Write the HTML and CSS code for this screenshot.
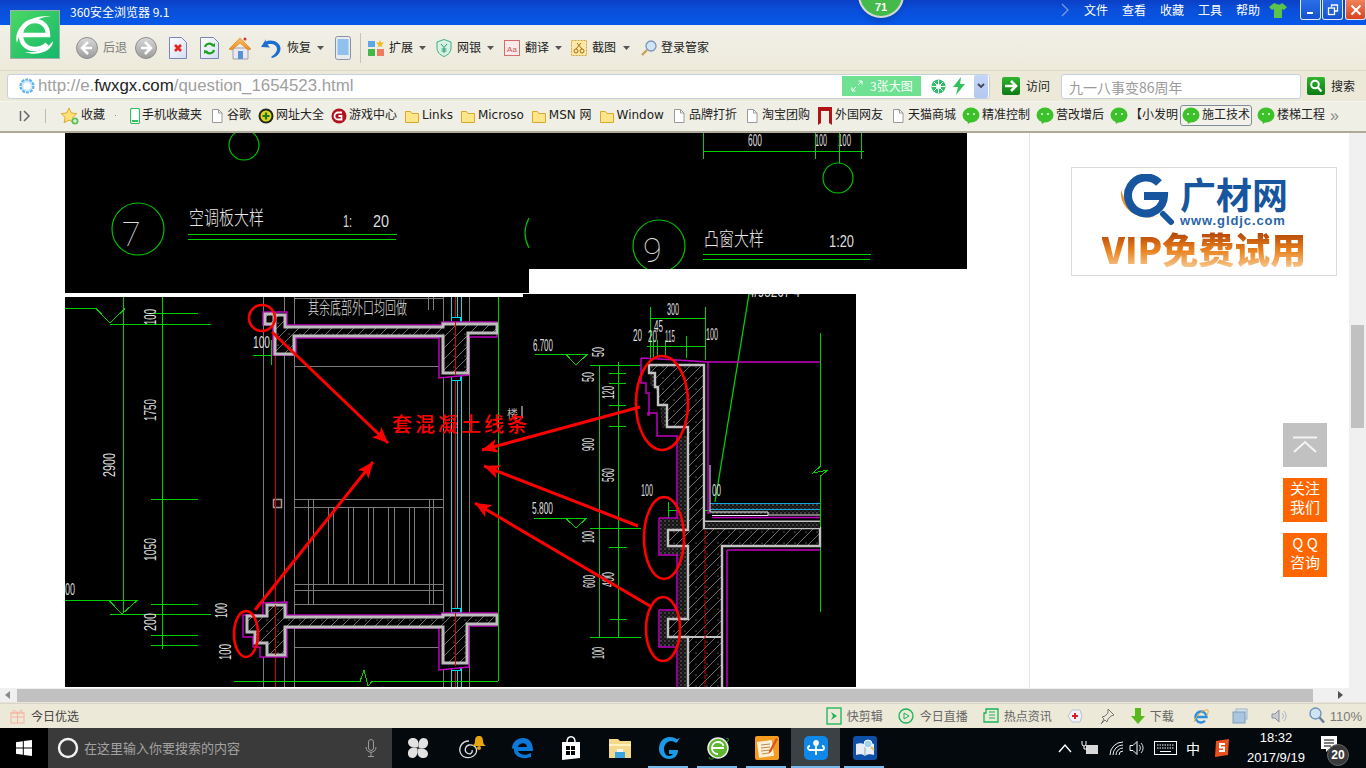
FILE: index.html
```html
<!DOCTYPE html>
<html lang="zh-CN">
<head>
<meta charset="utf-8">
<title>360安全浏览器 9.1</title>
<link rel="stylesheet" href="styles.css">
</head>
<body>
<svg class="defs" aria-hidden="true">
  <defs>
    <linearGradient id="gBall" x1="0" y1="0" x2="0" y2="1"><stop offset="0" stop-color="#d8d8d8"/><stop offset="1" stop-color="#9c9c9c"/></linearGradient>
    <linearGradient id="gPaper" x1="0" y1="0" x2="1" y2="1"><stop offset="0" stop-color="#ffffff"/><stop offset="1" stop-color="#d5dcf5"/></linearGradient>
    <linearGradient id="gGo" x1="0" y1="0" x2="0" y2="1"><stop offset="0" stop-color="#2fb52f"/><stop offset="1" stop-color="#0c7a14"/></linearGradient>
    <linearGradient id="gRoof" x1="0" y1="0" x2="0" y2="1"><stop offset="0" stop-color="#ffc060"/><stop offset="1" stop-color="#f08a20"/></linearGradient>
    <symbol id="doc" viewBox="0 0 14 16"><path d="M2.5 1.5h6l3.5 3.5v9.500h-9.500z" fill="#fff" stroke="#9a9a9a"/><path d="M8.500 1.500v3.500h3.500" fill="none" stroke="#9a9a9a"/></symbol>
    <symbol id="folder" viewBox="0 0 16 16"><path d="M1.500 3.500h5l1.500 2h6.500v9h-13z" fill="#ffe58a" stroke="#d9a82e"/></symbol>
    <symbol id="wechat" viewBox="0 0 18 18"><ellipse cx="9" cy="8" rx="8.500" ry="7.500" fill="#3cc12a"/><path d="M5 13l1 4 4-3z" fill="#3cc12a"/><circle cx="6" cy="7" r="1" fill="#eaffea"/><circle cx="12" cy="7" r="1" fill="#eaffea"/></symbol>
    <symbol id="caret" viewBox="0 0 7 4"><path d="M0 0h7L3.500 4z" fill="#555"/></symbol>
    <pattern id="hatch" width="11" height="11" patternUnits="userSpaceOnUse"><rect width="11" height="11" fill="#000"/><path d="M0 11L11 0" stroke="#6e6e6e" stroke-width="1"/><circle cx="3" cy="4" r=".6" fill="#aaa"/></pattern>
    <pattern id="speck" width="4" height="4" patternUnits="userSpaceOnUse"><rect width="4" height="4" fill="#141414"/><circle cx="1" cy="1" r=".7" fill="#888"/><circle cx="3" cy="3" r=".5" fill="#666"/></pattern>
    <marker id="ah" markerUnits="userSpaceOnUse" markerWidth="18" markerHeight="14" refX="16" refY="7" orient="auto"><path d="M0 0L16 7L0 14L4 7z" fill="#f00"/></marker>
  </defs>
</svg>

<div class="app">
  <header class="titlebar">
    <span class="title">360安全浏览器 9.1</span>
    <div class="menu">
      <svg class="chev" width="8" height="14" viewBox="0 0 8 14"><path d="M1 1l6 6-6 6" fill="none" stroke="#7f9fd8" stroke-width="1.200"/></svg>
      <span>文件</span><span>查看</span><span>收藏</span><span>工具</span><span>帮助</span>
      <svg class="shirt" width="18" height="16" viewBox="0 0 18 16"><path d="M5 1L0 5l3 3 2-1v9h8V7l2 1 3-3-5-4-2 1.500h-2z" fill="#5bc24a"/></svg>
      <div class="winbtns">
        <button class="winbtn"><svg width="10" height="10" viewBox="0 0 10 10"><rect x="1" y="7" width="6" height="2" fill="#fff"/></svg></button>
        <button class="winbtn"><svg width="12" height="12" viewBox="0 0 12 12"><path d="M4.500 3V1h6v6H8" fill="none" stroke="#fff" stroke-width="1.300"/><rect x="1.500" y="4" width="6" height="6.500" fill="none" stroke="#fff" stroke-width="1.300"/></svg></button>
        <button class="winbtn close"><svg width="12" height="12" viewBox="0 0 12 12"><path d="M1.500 1.500l9 9M10.500 1.500l-9 9" stroke="#fff" stroke-width="2"/></svg></button>
      </div>
    </div>
  </header>

  <div class="logo">
    <svg width="48" height="47" viewBox="0 0 48 47">
      <path d="M11 24h26c0-9-6-14-13-14-8 0-14 6-14 14 0 9 6 14 14 14 5 0 9-2 12-5" fill="none" stroke="#fff" stroke-width="4.500"/>
      <path d="M6 32C2 18 16 4 40 5 24 7 10 16 6 32z" fill="#fff"/>
      <path d="M42 30C42 40 26 46 14 41 26 42 36 38 42 30z" fill="#fff"/>
    </svg>
  </div>
  <div class="badge"><span>71</span></div>

  <nav class="toolbar">
    <svg class="ic" width="22" height="22" viewBox="0 0 22 22"><circle cx="11" cy="11" r="10.500" fill="url(#gBall)" stroke="#8e8e8e"/><path d="M12 5l-6 6 6 6M6 11h10" fill="none" stroke="#fff" stroke-width="2.600"/></svg>
    <span class="ml5 dim">后退</span>
    <svg class="ic ml8" width="22" height="22" viewBox="0 0 22 22"><circle cx="11" cy="11" r="10.500" fill="url(#gBall)" stroke="#8e8e8e"/><path d="M10 5l6 6-6 6M16 11H6" fill="none" stroke="#fff" stroke-width="2.600"/></svg>
    <svg class="ic ml12" width="18" height="22" viewBox="0 0 18 22"><path d="M.5.500h12l5 5v16H.5z" fill="url(#gPaper)" stroke="#7a86b8"/><path d="M6 8l6 6M12 8l-6 6" stroke="#e8251a" stroke-width="2.600"/></svg>
    <svg class="ic ml13" width="19" height="22" viewBox="0 0 19 22"><path d="M.5.500h13l5 5v16H.5z" fill="url(#gPaper)" stroke="#7a86b8"/><path d="M5 10a4.500 4.500 0 0 1 8-1.500M14 13a4.500 4.500 0 0 1-8 1.500" fill="none" stroke="#1ba51b" stroke-width="2.200"/><path d="M11 9l4 1V6zM8 14l-4-1v4z" fill="#1ba51b"/></svg>
    <svg class="ic ml9" width="24" height="24" viewBox="0 0 24 24"><path d="M5 12v11h15V12z" fill="#e8e8ee" stroke="#9aa3b5"/><rect x="10" y="15" width="5" height="8" fill="#5a90d8"/><path d="M1 13L12 2l11 11-3 1-8-7-8 7z" fill="url(#gRoof)" stroke="#d27a1c" stroke-width=".6"/><circle cx="17" cy="3" r="1.500" fill="#c33"/></svg>
    <svg class="ic ml7" width="22" height="22" viewBox="0 0 22 22"><path d="M7 2L2 10l9 .5-2.500-3C13 6 18 8 18 12c0 3-3 6-6 8l1 1c5-1 8.500-5 8.500-9.500C21.500 5 13 1.500 6.500 4.500z" fill="#1c6fd1"/></svg>
    <span class="ml6">恢复</span>
    <svg class="ml6" width="7" height="4"><use href="#caret"/></svg>
    <svg class="ic ml11" width="16" height="24" viewBox="0 0 16 24"><rect x=".5" y=".5" width="15" height="23" rx="2" fill="#e8eaee" stroke="#8a93a5"/><rect x="2.500" y="3" width="11" height="16" fill="#8fc0ee"/></svg>
    <i class="divider ml9"></i>
    <svg class="ic ml7" width="16" height="16" viewBox="0 0 16 16"><rect x="0" y="1" width="7" height="6" fill="#5aa8e8"/><path d="M12 0l1 2.500h3L13.500 5l.8 2.500L12 6l-2.300 1.500L10.500 5 8 2.500h3z" fill="#f3b71c"/><rect x="0" y="9" width="7" height="7" fill="#45b649"/><rect x="9" y="9" width="7" height="7" fill="#ee7b60"/></svg>
    <span class="ml5">扩展</span>
    <svg class="ml6" width="7" height="4"><use href="#caret"/></svg>
    <svg class="ic ml10" width="16" height="18" viewBox="0 0 16 18"><path d="M8 .5l7 2.500v6c0 4-3 7-7 8.500-4-1.500-7-4.500-7-8.500V3z" fill="#d5f2e5" stroke="#3fae82"/><path d="M5 5l3 3.500L11 5M8 8.500V14M5.500 10h5M5.500 12h5" fill="none" stroke="#2d9a6e"/></svg>
    <span class="ml5">网银</span>
    <svg class="ml6" width="7" height="4"><use href="#caret"/></svg>
    <svg class="ic ml10" width="16" height="16" viewBox="0 0 16 16"><rect x=".5" y=".5" width="15" height="15" fill="#fbeaea" stroke="#d86a6a"/><text class="ad-mark" x="8" y="11.500">Aa</text></svg>
    <span class="ml5">翻译</span>
    <svg class="ml6" width="7" height="4"><use href="#caret"/></svg>
    <svg class="ic ml9" width="16" height="16" viewBox="0 0 16 16"><rect x=".5" y=".5" width="15" height="15" fill="#ffe9a8" stroke="#d9a440" stroke-dasharray="2 1"/><circle cx="5" cy="11" r="2" fill="none" stroke="#b06a10"/><circle cx="11" cy="11" r="2" fill="none" stroke="#b06a10"/><path d="M5 9l5-6M11 9L6 3" stroke="#b06a10"/></svg>
    <span class="ml5">截图</span>
    <svg class="ml7" width="7" height="4"><use href="#caret"/></svg>
    <svg class="ic ml11" width="16" height="16" viewBox="0 0 16 16"><circle cx="10" cy="6" r="5" fill="#cfe4f8" stroke="#7a97b8" stroke-width="1.300"/><path d="M6 10l-5 5" stroke="#c9a25c" stroke-width="2.400"/></svg>
    <span class="ml4">登录管家</span>
  </nav>

  <div class="addrbar">
    <div class="urlbox">
      <svg class="ic" width="16" height="16" viewBox="0 0 16 16"><circle cx="8" cy="8" r="6.500" fill="#cfe8fb" stroke="#62b3ee" stroke-width="2.200" stroke-dasharray="3 1"/><circle cx="8" cy="8" r="3.500" fill="#fff"/></svg>
      <span class="url">http://e.<b>fwxgx.com</b>/question_1654523.html</span>
      <span class="bigpic">
        <svg width="12" height="12" viewBox="0 0 12 12"><path d="M1 11l4-4M7 5l4-4M7.500 1H11v3.500M1 7.500V11h3.500" fill="none" stroke="#fff"/></svg>
        <span>3张大图</span>
      </span>
      <svg class="ml10 ic" width="15" height="15" viewBox="0 0 15 15"><circle cx="7.500" cy="7.500" r="7" fill="#2fbf6a"/><circle cx="7.500" cy="7.500" r="2.500" fill="#fff"/><path d="M7.500 1v4M14 7.500h-4M7.500 14v-4M1 7.500h4M3 3l3 3M12 3L9 6M12 12L9 9M3 12l3-3" stroke="#fff"/></svg>
      <svg class="ml7 ic" width="12" height="18" viewBox="0 0 12 18"><path d="M8 0L0 10h5l-2 8 9-11H7z" fill="#2fc25f"/></svg>
      <span class="drop"><svg width="8" height="6" viewBox="0 0 8 6"><path d="M1 1l3 3 3-3" fill="none" stroke="#445" stroke-width="1.800"/></svg></span>
    </div>
    <svg class="ic ml12" width="18" height="18" viewBox="0 0 18 18"><rect width="18" height="18" rx="2" fill="url(#gGo)"/><path d="M3 9h10M9 4l5 5-5 5" fill="none" stroke="#fff" stroke-width="2.600"/></svg>
    <span class="ml6">访问</span>
    <div class="searchbox">九一八事变86周年</div>
    <svg class="ic ml6" width="18" height="18" viewBox="0 0 18 18"><rect width="18" height="18" rx="2" fill="url(#gGo)"/><circle cx="8" cy="7.500" r="3.800" fill="none" stroke="#fff" stroke-width="2"/><path d="M11 10.500l3.500 4" stroke="#fff" stroke-width="2.200"/></svg>
    <span class="ml6">搜索</span>
  </div>

  <div class="favs">
    <svg class="favtoggle" width="12" height="12" viewBox="0 0 12 12"><path d="M1.500 1v10" stroke="#666" stroke-width="1.500"/><path d="M5 1l5 5-5 5" fill="none" stroke="#666" stroke-width="1.500"/></svg>
    <i class="favsep"></i>
    <a class="fav ml15"><svg width="18" height="18" viewBox="0 0 18 18"><path d="M8 1l2.300 5 5.500.6-4 3.700 1.100 5.400L8 13l-4.900 2.700 1.100-5.400-4-3.700L5.700 6z" fill="#ffe27a" stroke="#dca92a"/><circle cx="14" cy="14" r="3.500" fill="#5cc05c"/><path d="M14 12v4M12 14h4" stroke="#fff"/></svg>收藏</a>
    <i class="dot"></i>
    <a class="fav ml14"><svg width="10" height="16" viewBox="0 0 10 16"><rect x=".5" y=".5" width="9" height="15" rx="1.500" fill="#fff" stroke="#2fc25f" stroke-width="1.200"/><rect x="2" y="12" width="6" height="2" fill="#2fc25f"/></svg>手机收藏夹</a>
    <a class="fav"><svg class="pg" width="14" height="16"><use href="#doc"/></svg>谷歌</a>
    <a class="fav"><svg width="16" height="16" viewBox="0 0 16 16"><circle cx="8" cy="8" r="7.500" fill="#1e2a12"/><circle cx="8" cy="8" r="5.500" fill="#e2d622"/><path d="M8 4.500v7M4.500 8h7" stroke="#1f7a1f" stroke-width="2.200"/></svg>网址大全</a>
    <a class="fav"><svg width="16" height="16" viewBox="0 0 16 16"><circle cx="8" cy="8" r="7.500" fill="#b1121f"/><path d="M11 4.500H7A3.500 3.500 0 0 0 7 11.500h3.500V8H7.500" fill="none" stroke="#fff" stroke-width="1.800"/></svg>游戏中心</a>
    <a class="fav"><svg width="16" height="16"><use href="#folder"/></svg>Links</a>
    <a class="fav"><svg width="16" height="16"><use href="#folder"/></svg>Microso</a>
    <a class="fav"><svg width="16" height="16"><use href="#folder"/></svg>MSN 网</a>
    <a class="fav"><svg width="16" height="16"><use href="#folder"/></svg>Window</a>
    <a class="fav"><svg class="pg" width="14" height="16"><use href="#doc"/></svg>品牌打折</a>
    <a class="fav"><svg class="pg" width="14" height="16"><use href="#doc"/></svg>淘宝团购</a>
    <a class="fav"><svg class="pg" width="14" height="18" viewBox="0 0 14 18"><path d="M0 0h14v18l-3-2V4H3v12l-3 2z" fill="#b01414"/></svg>外国网友</a>
    <a class="fav"><svg class="pg" width="14" height="16"><use href="#doc"/></svg>天猫商城</a>
    <a class="fav wx"><svg width="18" height="18"><use href="#wechat"/></svg>精准控制</a>
    <a class="fav wx"><svg width="18" height="18"><use href="#wechat"/></svg>营改增后</a>
    <a class="fav wx"><svg width="18" height="18"><use href="#wechat"/></svg>【小发明</a>
    <a class="fav on"><svg width="18" height="18"><use href="#wechat"/></svg>施工技术</a>
    <a class="fav wx"><svg width="18" height="18"><use href="#wechat"/></svg>楼梯工程</a>
    <span class="more">»</span>
  </div>

  <main class="page">
    <div class="doc">
      <div class="column">
        <svg class="cad" width="902" height="554" viewBox="65 133 902 554">
          <rect x="65" y="133" width="464" height="160" fill="#000"/>
          <rect x="529" y="133" width="438" height="136" fill="#000"/>
          <rect x="65" y="297" width="458" height="390" fill="#000"/>
          <rect x="523" y="294" width="333" height="393" fill="#000"/>

          <g class="gr">
            <circle class="thin" cx="244" cy="145" r="15"/>
            <circle class="thin" cx="138" cy="229" r="26"/>
            <circle class="thin" cx="838" cy="178" r="15"/>
            <circle class="thin" cx="659" cy="246" r="26"/>
            <path class="thin" d="M529 218Q521 233 529 248"/>
          </g>
          <text class="big" x="122" y="246">7</text>
          <text class="big" x="643" y="262">9</text>
          <text class="note" transform="translate(189,225) scale(1,1.300)">空调板大样</text>
          <text class="note" transform="translate(704,246) scale(1,1.300)">凸窗大样</text>
          <text class="n" x="343" y="227" textLength="9" lengthAdjust="spacingAndGlyphs">1:</text>
          <text class="n" x="373" y="227" textLength="16" lengthAdjust="spacingAndGlyphs">20</text>
          <text class="n" x="829" y="247" textLength="25" lengthAdjust="spacingAndGlyphs">1:20</text>
          <text class="n" x="748" y="146" textLength="14" lengthAdjust="spacingAndGlyphs">600</text>
          <text class="n" x="815" y="146" textLength="12" lengthAdjust="spacingAndGlyphs">100</text>
          <text class="n" x="838" y="146" textLength="13" lengthAdjust="spacingAndGlyphs">100</text>
          <path class="gl" d="M188 234.500H397M188 239.500H396M703 254.500H871M703 259.500H870M703 151.500H864M703.500 133V159M815.500 133V159M839.500 133V163M861.500 133V159"/>

          <text class="n" x="748" y="297" textLength="52" lengthAdjust="spacingAndGlyphs">4/95267 4</text>
          <rect x="529" y="269" width="438" height="25" fill="#fff"/>
          <rect x="856" y="269" width="111" height="420" fill="#fff"/>

          <path class="gy" d="M263.500 297V687M284.500 297V687M294.500 297V687M443.500 297V687M469.500 297V687M294 298.500H443M428.500 297V310M433.500 297V310M294 366.500H443M294 647.500H439"/>
          <path class="gy" d="M294 499.500H443M294 507.500H443M294 584.500H443M294 590.500H443M294 604.500H443M308.500 499V604M313.500 499V604M328.500 507V584M333.500 507V584M348.500 507V584M353.500 507V584M368.500 507V584M373.500 507V584M388.500 507V584M394.500 507V584M409.500 507V584M414.500 507V584M429.500 499V604M433.500 499V604"/>
          <rect class="sq" x="273.500" y="499.500" width="8" height="8"/>
          <path class="rd" d="M275.500 335V687M455.500 297V687"/>
          <path class="cy" d="M451.500 297V687M461.500 297V687M457.500 297V687"/>
          <rect class="cybox" x="451.500" y="317.500" width="9" height="6"/>
          <rect class="cybox" x="451.500" y="374.500" width="9" height="6"/>
          <rect class="cybox" x="451.500" y="608.500" width="9" height="4"/>
          <rect class="cybox" x="451.500" y="666.500" width="9" height="4"/>

          <polygon class="mg" points="263,312 287,312 287,325 442,325 442,322 497,322 497,337 469,337 469,375 439,378 439,338 296,338 296,355 273,355 273,325 263,325"/>
          <polygon class="slab" points="275,315 285,315 285,327 443,327 443,324 497,324 497,333 468,333 468,373 443,373 443,336 294,336 294,354 275,354"/>
          <rect class="slab" x="265" y="314" width="9" height="10"/>
          <polygon class="mg" points="263,603 287,602 287,615 442,615 442,613 497,613 497,626 469,626 469,667 439,670 439,628 287,628 287,657 260,657 260,647 253,647 253,637 243,637 243,615 263,615"/>
          <polygon class="slab" points="267,605 285,605 285,617 443,617 443,615 497,615 497,624 467,624 467,663 443,663 443,627 285,627 285,655 267,655 267,643 255,643 255,632 247,632 247,616 267,616"/>
          <path class="rd" d="M275.500 605V655M455.500 322V375M455.500 613V666"/>

          <path class="gl" d="M123.500 297V613M162.500 297V649M65 308.500H96L110 323 125 308.500M150 313.500H198M110 324.500H211M151 499.500H198M151 604.500H198M110 614.500H211M151 635.500H198M151 645.500H198M65 600.500H137L122 614 109 600.500M498.500 297V681M234 681.500H360L364 670 368 686 372 681.500H498M271 340V365M253 355.500H272"/>
          <path class="gl" d="M650.500 307V360M705.500 307V360M650 318.500H705M647 346.500H706M653.500 340V358M657.500 340V358M665.500 340V358M686.500 336V358M535 354.500H587L576 365 566 354.500M590 365.500H641M599.500 365V637M618.500 362V637M609 373.500H626M609 383.500H626M609 405.500H626M609 426.500H626M590 528.500H641M609 547.500H627M610 619.500H627M590 637.500H641M534 518.500H586L576 528 566 518.500M668 502V518M668 510.500H712"/>
          <path class="gl" d="M820.500 333V466L813 473 828 470 820.500 476V612"/>
          <path class="gld" d="M749 294L715 502"/>

          <path class="mgl" d="M708 362H820M641 358L677 360 708 362V513H712M641 358V383H646V393H649V415H648V413H657V436H677V688M659 518H680M659 518V555H680M659 610H677M659 610V647H677M727 550V688M727 550H820M712 517.500H820M688 688"/>
          <rect class="band" x="678" y="436" width="9" height="252"/>
          <polygon class="speck" points="652,367 664,367 664,400 670,400 670,428 662,428 660,404 656,390 650,385 650,372"/>
          <rect class="speck" x="660" y="519" width="20" height="35"/>
          <rect class="speck" x="660" y="611" width="18" height="35"/>
          <polygon class="wall" points="649,365 704,365 704,528 820,528 820,546 722,546 722,690 688,690 688,637 668,637 668,619 688,619 688,546 668,546 668,530 688,530 688,427 667,427 667,405 658,405 658,387 655,387 655,373 649,373"/>
          <path class="gtk" d="M688 637H722M704 521.500H820"/>
          <rect class="speck" x="710" y="504" width="110" height="10"/>
          <path class="cyb" d="M710 503.500H820M710 509.500H820"/>
          <path class="wh" d="M710 465V512H768V515H820M712 515.500H768"/>
          <rect class="speck" x="705" y="522" width="115" height="6"/>
          <path class="rdd" d="M705 530V687"/>

          <text class="cnt" transform="translate(308,314) scale(1,1.600)">其余底部外口均回做</text>
          <rect x="65" y="293" width="458" height="4" fill="#fff"/>
          <rect x="523" y="293" width="6" height="1" fill="#fff"/>
          <rect x="529" y="269" width="327" height="25" fill="#fff"/>

          <text class="n" transform="rotate(-90 156 325)" x="156" y="325" textLength="16" lengthAdjust="spacingAndGlyphs">100</text>
          <text class="n" transform="rotate(-90 156 421)" x="156" y="421" textLength="22" lengthAdjust="spacingAndGlyphs">1750</text>
          <text class="n" transform="rotate(-90 115 477)" x="115" y="477" textLength="24" lengthAdjust="spacingAndGlyphs">2900</text>
          <text class="n" transform="rotate(-90 156 561)" x="156" y="561" textLength="23" lengthAdjust="spacingAndGlyphs">1050</text>
          <text class="n" transform="rotate(-90 156 631)" x="156" y="631" textLength="18" lengthAdjust="spacingAndGlyphs">200</text>
          <text class="n" transform="rotate(-90 227 618)" x="227" y="618" textLength="15" lengthAdjust="spacingAndGlyphs">100</text>
          <text class="n" transform="rotate(-90 231 660)" x="231" y="660" textLength="16" lengthAdjust="spacingAndGlyphs">100</text>
          <text class="n" x="65" y="595" textLength="10" lengthAdjust="spacingAndGlyphs">00</text>
          <text class="n" x="253" y="348" textLength="17" lengthAdjust="spacingAndGlyphs">100</text>

          <text class="n" transform="rotate(-90 604 357)" x="604" y="357" textLength="10" lengthAdjust="spacingAndGlyphs">50</text>
          <text class="n" transform="rotate(-90 594 382)" x="594" y="382" textLength="10" lengthAdjust="spacingAndGlyphs">50</text>
          <text class="n" transform="rotate(-90 614 399)" x="614" y="399" textLength="13" lengthAdjust="spacingAndGlyphs">120</text>
          <text class="n" transform="rotate(-90 594 451)" x="594" y="451" textLength="13" lengthAdjust="spacingAndGlyphs">900</text>
          <text class="n" transform="rotate(-90 614 482)" x="614" y="482" textLength="14" lengthAdjust="spacingAndGlyphs">560</text>
          <text class="n" transform="rotate(-90 594 543)" x="594" y="543" textLength="12" lengthAdjust="spacingAndGlyphs">100</text>
          <text class="n" transform="rotate(-90 595 588)" x="595" y="588" textLength="13" lengthAdjust="spacingAndGlyphs">600</text>
          <text class="n" transform="rotate(-90 614 587)" x="614" y="587" textLength="15" lengthAdjust="spacingAndGlyphs">400</text>
          <text class="n" transform="rotate(-90 604 659)" x="604" y="659" textLength="12" lengthAdjust="spacingAndGlyphs">100</text>

          <text class="n" x="667" y="315" textLength="12" lengthAdjust="spacingAndGlyphs">300</text>
          <text class="n" x="654" y="332" textLength="9" lengthAdjust="spacingAndGlyphs">45</text>
          <text class="n" x="633" y="341" textLength="9" lengthAdjust="spacingAndGlyphs">20</text>
          <text class="n" x="648" y="342" textLength="9" lengthAdjust="spacingAndGlyphs">20</text>
          <text class="n" x="665" y="342" textLength="10" lengthAdjust="spacingAndGlyphs">115</text>
          <text class="n" x="706" y="340" textLength="12" lengthAdjust="spacingAndGlyphs">100</text>
          <text class="n" x="533" y="351" textLength="20" lengthAdjust="spacingAndGlyphs">6.700</text>
          <text class="n" x="532" y="514" textLength="21" lengthAdjust="spacingAndGlyphs">5.800</text>
          <text class="n" x="641" y="496" textLength="12" lengthAdjust="spacingAndGlyphs">100</text>
          <text class="n" x="712" y="496" textLength="9" lengthAdjust="spacingAndGlyphs">00</text>
          <text class="cnt" x="507" y="418">楼</text>
          <path class="wh" d="M522 406V418"/>

          <line class="arrow" x1="272" y1="332" x2="388" y2="443"/>
          <line class="arrow" x1="255" y1="610" x2="373" y2="462"/>
          <line class="arrow" x1="640" y1="407" x2="482" y2="450"/>
          <line class="arrow" x1="638" y1="526" x2="484" y2="466"/>
          <line class="arrow" x1="650" y1="606" x2="475" y2="503"/>
          <circle class="ring" cx="262" cy="318" r="13"/>
          <ellipse class="ring" cx="246" cy="634" rx="12" ry="23"/>
          <ellipse class="ring" cx="662" cy="403" rx="26" ry="47"/>
          <ellipse class="ring" cx="664" cy="538" rx="20" ry="41"/>
          <ellipse class="ring" cx="663" cy="629" rx="17" ry="32"/>
          <text class="callout" x="392" y="432">套混凝土线条</text>
        </svg>
      </div>
      <aside class="side">
        <div class="ad">
          <div class="ad-brand">
            <svg class="ad-g" width="58" height="52" viewBox="0 0 58 52">
              <path d="M2 16C0 34 18 48 40 42 24 46 8 36 2 16z" fill="#e8962f"/>
              <path d="M40 9A18 18 0 1 0 45 22H25" fill="none" stroke="#17569f" stroke-width="8"/>
              <path d="M44 40l8 8" stroke="#17569f" stroke-width="6" stroke-linecap="round"/>
            </svg>
            <div class="ad-name">
              <span class="ad-cn">广材网</span>
              <span class="ad-url">www.gldjc.com</span>
            </div>
          </div>
          <div class="ad-vip">VIP免费试用</div>
        </div>
      </aside>
    </div>
    <div class="vscroll"><i class="vthumb"></i></div>
    <div class="floats">
      <button class="float top"><svg width="26" height="18" viewBox="0 0 26 18"><path d="M1 1.500h24M2 16L13 6l11 10" fill="none" stroke="#f4f4f4" stroke-width="2"/></svg></button>
      <a class="float orange">关注<br>我们</a>
      <a class="float orange">Q Q<br>咨询</a>
    </div>
  </main>

  <div class="hscroll">
    <svg class="harrow" width="6" height="8" viewBox="0 0 6 8"><path d="M5 0v8L0 4z" fill="#8a8a8a"/></svg>
    <i class="hthumb"></i>
    <svg class="harrow right" width="6" height="8" viewBox="0 0 6 8"><path d="M0 0v8l5-4z" fill="#505050"/></svg>
  </div>

  <footer class="status">
    <svg class="ic" width="15" height="16" viewBox="0 0 15 16"><rect x="1" y="5" width="13" height="10" fill="none" stroke="#f4b49e"/><path d="M.5 5h14M7.500 5v10M7.500 5C4 1 2 2 3.500 4M7.500 5c3.500-4 5.500-3 4-1M1 9h13" fill="none" stroke="#f4b49e"/></svg>
    <span class="ml6 st-left">今日优选</span>
    <div class="st-right">
      <svg class="ic" width="16" height="18" viewBox="0 0 16 18"><rect x="1" y="1" width="14" height="16" fill="none" stroke="#14b556" stroke-width="1.300"/><path d="M5 5l6 4-6 4 2-4z" fill="#14b556"/></svg>
      <span class="ml5">快剪辑</span>
      <svg class="ic ml15" width="16" height="16" viewBox="0 0 16 16"><circle cx="8" cy="8" r="7" fill="none" stroke="#14b556" stroke-width="1.300"/><path d="M6 5l5 3-5 3z" fill="none" stroke="#14b556"/></svg>
      <span class="ml6">今日直播</span>
      <svg class="ic ml15" width="16" height="16" viewBox="0 0 16 16"><path d="M3 1h12v13H1V5h2z" fill="none" stroke="#14b556" stroke-width="1.300"/><path d="M6 4h6M6 7h6M6 10h6" stroke="#14b556"/></svg>
      <span class="ml5">热点资讯</span>
      <svg class="ic ml15" width="16" height="16" viewBox="0 0 16 16"><path d="M1 8l4-6h8l2 6-2 6H5z" fill="#f1f1f6" stroke="#b9c0d4"/><path d="M8 5v6M5 8h6" stroke="#d81e2c" stroke-width="2"/></svg>
      <svg class="ic ml16" width="16" height="16" viewBox="0 0 16 16"><path d="M9 1l6 6-3 1-3 3-1 3-2-2-4 4 3-5-2-2 3-1 3-3z" fill="none" stroke="#777"/></svg>
      <svg class="ic ml15" width="16" height="18" viewBox="0 0 16 18"><path d="M5 1h6v8h4l-7 8-7-8h4z" fill="#58b81e"/></svg>
      <span class="ml4">下载</span>
      <svg class="ic ml19" width="16" height="16" viewBox="0 0 16 16"><path d="M3 9h10.500a5.500 5.500 0 1 0-1.500 3.800" fill="none" stroke="#2d8fe0" stroke-width="2.400"/><path d="M1 14C4 6 11 1 15 2c1 3-2 6-2 6" fill="none" stroke="#f0b020"/></svg>
      <svg class="ic ml23" width="16" height="16" viewBox="0 0 16 16"><rect x="4" y="1" width="11" height="10" fill="#d3e2ef" stroke="#9fb5c8"/><rect x="1" y="4" width="12" height="11" fill="#a8c6e0" stroke="#7f9db8"/></svg>
      <svg class="ic ml23" width="16" height="16" viewBox="0 0 16 16"><path d="M1 6h3l4-4v12l-4-4H1z" fill="#c8ccd4" stroke="#8a909a"/><path d="M11 5a4 4 0 0 1 0 6M13 3a7 7 0 0 1 0 10" fill="none" stroke="#a8b4c4"/></svg>
      <svg class="ic ml22" width="16" height="18" viewBox="0 0 16 18"><circle cx="6.500" cy="6.500" r="5.500" fill="#cfe3f8" stroke="#6a8fb8" stroke-width="1.300"/><path d="M10.500 10.500l4.500 5" stroke="#6a7f9a" stroke-width="2.600"/></svg>
      <span class="ml5 zoomval">110%</span>
    </div>
  </footer>

  <footer class="taskbar">
    <div class="start"><svg width="16" height="16" viewBox="0 0 16 16"><path d="M0 2.300l6.800-1V7.500H0zM7.800 1.100L16 0v7.500H7.800zM0 8.500h6.800v6.200l-6.800-1zM7.800 8.500H16V16l-8.200-1.100z" fill="#fff"/></svg></div>
    <div class="cortana">
      <svg width="22" height="22" viewBox="0 0 22 22"><circle cx="11" cy="11" r="9" fill="none" stroke="#f2f2f2" stroke-width="2.400"/></svg>
      <span class="ct-text">在这里输入你要搜索的内容</span>
      <svg class="mic" width="12" height="18" viewBox="0 0 12 18"><rect x="3.500" y=".5" width="5" height="11" rx="2.500" fill="none" stroke="#9a9a9a"/><path d="M1 8c0 7 10 7 10 0M6 13v4M3 17.500h6" fill="none" stroke="#9a9a9a"/></svg>
    </div>
    <div class="tb tb-a">
      <svg width="22" height="22" viewBox="0 0 22 22"><g fill="#e2e2e2"><path id="lobe" d="M10.500 10.500C6 11 1.500 10 1 5.500 1 2 4 .5 7 1c3 .5 4.500 3 4.500 5.500 0 1.500-.5 3-1 4z"/><path d="M11.500 10.500C11 6 12 1.500 16.500 1 20 1 21.500 4 21 7c-.5 3-3 4.500-5.500 4.500-1.500 0-3-.5-4-1z"/><path d="M11.500 11.500C16 11 20.500 12 21 16.500 21 20 18 21.500 15 21c-3-.5-4.500-3-4.500-5.500 0-1.500.5-3 1-4z"/><path d="M10.500 11.500C11 16 10 20.500 5.500 21 2 21 .5 18 1 15c.5-3 3-4.500 5.500-4.500 1.500 0 3 .5 4 1z"/></g></svg>
    </div>
    <div class="tb tb-b">
      <svg class="tb-swirl" width="30" height="26" viewBox="0 0 30 26"><path d="M12 6C4 6 1 14 4 19c3 5 12 5 15-1 2-5-2-9-7-8-4 1-5 6-2 8 3 2 6 0 5-3" fill="none" stroke="#ddd" stroke-width="1.300"/><path d="M22 1c3 0 4 2 4 5 0 2 1 4 3 5H15c2-1 3-3 3-5 0-3 1-5 4-5z" fill="#e8a50c"/><circle cx="22" cy="13" r="2" fill="#e8a50c"/></svg>
    </div>
    <div class="tb"><svg width="22" height="22" viewBox="0 0 22 22"><path d="M1 12C1 5 6 1 12 1c6 0 10 4 10 13H7c1 4 8 5 13 2v4c-8 3-17 0-17-7 0-1-1-2-2-1zm6-2h9c0-5-8-5-9 0z" fill="#0c78d8"/></svg></div>
    <div class="tb"><svg width="20" height="24" viewBox="0 0 20 24"><path d="M1 6h18v16l-18 2z" fill="#fff"/><path d="M6 6c0-7 8-7 8 0" fill="none" stroke="#fff" stroke-width="1.500"/><path d="M5 10h4v4H5zM10 10h4v4h-4zM5 15h4v4H5zM10 15h4v4h-4z" fill="#000"/></svg></div>
    <div class="tb"><svg width="22" height="20" viewBox="0 0 22 20"><path d="M0 1h9l2 2h11v17H0z" fill="#f5d98a"/><path d="M0 6h22v2H0z" fill="#fff2c0"/><path d="M6 14h10v6H6z" fill="#3ba5e0"/><path d="M8 11h6v3H8z" fill="#f5f5f5"/></svg></div>
    <div class="tb run"><svg width="24" height="24" viewBox="0 0 24 24"><path d="M21 4c-2-2-5-3-8-3C6 1 2 6 2 13c0 6 5 10 10 10 6 0 9-4 9-9h-9v4h4c-1 1-2 2-4 2-3 0-5-3-5-7s3-8 7-8c2 0 4 1 5 2l2-2z" fill="#1b9ae8"/><path d="M18 4l5-2-3 4z" fill="#1b9ae8"/></svg></div>
    <div class="tb run"><svg width="24" height="26" viewBox="0 0 24 26"><circle cx="12" cy="13" r="10" fill="#5db82f" stroke="#eee" stroke-width="1.500"/><path d="M6 13h12M12 7c-4 0-6 3-6 6s2 6 6 6M12 7c3 0 5 2 5.500 4" fill="none" stroke="#fff" stroke-width="1.800"/><path d="M4 22c-3 2 2 3 4 1M20 4c3-2 3 1 1 3" fill="none" stroke="#3d9a20"/></svg></div>
    <div class="tb run"><svg width="24" height="24" viewBox="0 0 24 24"><rect width="24" height="24" rx="2" fill="#f39c1f"/><rect x="3" y="5" width="15" height="16" transform="rotate(-8 10 13)" fill="#fbf0d6"/><path d="M6 9l9-1M6 12l9-1M6 15l9-1M7 18l6-1" stroke="#b98b4d"/><path d="M21 2l-7 13-1 3 3-2 7-13z" fill="#d8531e"/></svg></div>
    <div class="tb active"><svg width="24" height="24" viewBox="0 0 24 24"><rect width="24" height="24" rx="5" fill="#1088e8"/><path d="M12 5v14M12 5a2 2 0 0 1 2 2c0 2-2 3-2 3s-2-1-2-3a2 2 0 0 1 2-2zM12 14H6a2 2 0 0 1 0-4M12 14h6a2 2 0 0 0 0-4" fill="none" stroke="#fff" stroke-width="1.800"/></svg></div>
    <div class="tb run"><svg width="24" height="24" viewBox="0 0 24 24"><rect width="24" height="24" rx="3" fill="#0e4fa8"/><path d="M3 8c3-1 7-1 9 1 2-2 6-2 9-1v11c-3-1-7-1-9 1-2-2-6-2-9-1z" fill="#e8eef8"/><path d="M12 9v11" stroke="#8aa"/><circle cx="15" cy="8" r="4" fill="#9fd0f5" stroke="#fff"/><path d="M18 11l3 3" stroke="#e8c060" stroke-width="2"/></svg></div>

    <div class="tray">
      <svg width="16" height="10" viewBox="0 0 16 10"><path d="M2 9l6-7 6 7" fill="none" stroke="#fff" stroke-width="1.400"/></svg>
      <svg class="ml8" width="18" height="16" viewBox="0 0 18 16"><rect x="5" y="5" width="12" height="9" fill="#d8d8d8"/><path d="M1 1v3a2 2 0 0 0 4 0V1M3 6v3h3" fill="none" stroke="#fff"/></svg>
      <svg class="ml9" width="18" height="16" viewBox="0 0 18 16"><path d="M2 15a13 13 0 0 1 13-13M5 15a10 10 0 0 1 10-10M8 15a7 7 0 0 1 7-7M11 15a4 4 0 0 1 4-4" fill="none" stroke="#eee"/></svg>
      <svg class="ml3" width="16" height="16" viewBox="0 0 16 16"><path d="M1 5.500h3l4-4v13l-4-4H1z" fill="none" stroke="#fff"/><path d="M10 5a4 4 0 0 1 0 6M12 3a7 7 0 0 1 0 10" fill="none" stroke="#ddd"/></svg>
      <svg class="ml9" width="23" height="14" viewBox="0 0 23 14"><rect x=".5" y=".5" width="22" height="13" fill="none" stroke="#fff"/><path d="M3 4h17M3 7h17" stroke="#fff" stroke-dasharray="1.500 1"/><path d="M6 10.500h11" stroke="#fff"/></svg>
      <span class="ml9 ime">中</span>
      <svg class="ml14" width="16" height="18" viewBox="0 0 16 18"><path d="M2 2l13-2-1 16-13 2z" fill="#ea4f1f"/><path d="M11 5H6v3.500h4V12H5" fill="none" stroke="#fff" stroke-width="2"/></svg>
      <div class="clock ml15"><span>18:32</span><span>2017/9/19</span></div>
      <div class="notif ml13">
        <svg width="18" height="18" viewBox="0 0 18 18"><path d="M1 1h16v13H9l-3 3v-3H1z" fill="#fff"/><path d="M4 5h10M4 8h10M4 11h7" stroke="#000"/></svg>
        <span class="notif-n">20</span>
      </div>
    </div>
  </footer>
</div>
</body>
</html>
```

FILE: styles.css
```css
* { box-sizing: border-box; }
html, body { margin: 0; padding: 0; width: 1366px; height: 768px; overflow: hidden; background: #fff; }
body { font: 12px/1.2 "Noto Sans CJK SC", "Liberation Sans", sans-serif; color: #222; }
.defs { position: absolute; width: 0; height: 0; }
svg { flex: none; display: block; }
button { border: 0; padding: 0; font: inherit; }
i { display: block; }

.ml3 { margin-left: 3px; } .ml4 { margin-left: 4px; } .ml5 { margin-left: 5px; }
.ml6 { margin-left: 6px; } .ml7 { margin-left: 7px; } .ml8 { margin-left: 8px; }
.ml9 { margin-left: 9px; } .ml10 { margin-left: 10px; } .ml11 { margin-left: 11px; }
.ml12 { margin-left: 12px; } .ml13 { margin-left: 13px; } .ml14 { margin-left: 14px; }
.ml15 { margin-left: 15px; } .ml16 { margin-left: 16px; } .ml19 { margin-left: 19px; }
.ml22 { margin-left: 22px; } .ml23 { margin-left: 23px; }

.app { position: relative; width: 1366px; height: 768px; display: flex; flex-direction: column; overflow: hidden; }

/* title bar */
.titlebar { height: 25px; display: flex; align-items: flex-start; padding-left: 70px; color: #fff; background: linear-gradient(#0b3fc6, #0a4fda 40%, #0658e8); }
.title { margin-top: 4px; font-size: 12px; line-height: 16px; }
.menu { margin-left: auto; display: flex; align-items: center; height: 20px; font-size: 12px; }
.menu > span { margin-left: 14px; }
.chev + span { margin-left: 15px; }
.shirt { margin-left: 9px; }
.winbtns { display: flex; gap: 1px; margin-left: 13px; }
.winbtn { width: 21px; height: 20px; display: flex; align-items: center; justify-content: center; background: linear-gradient(#2a6ee8, #1553d0); border: 1px solid #dfe9fb; border-top: 0; border-radius: 0 0 3px 3px; }
.winbtn.close { margin-left: 1px; background: linear-gradient(#f0825a, #d9431f); }

.logo { position: absolute; left: 10px; top: 10px; width: 50px; height: 49px; display: flex; align-items: center; justify-content: center; background: linear-gradient(135deg, #4bd764, #14b96c); border: 1px solid #9fb0a8; }
.badge { position: absolute; left: 858px; top: -28px; width: 46px; height: 46px; display: flex; align-items: flex-end; justify-content: center; padding-bottom: 3px; border-radius: 50%; background: #45b94a; border: 2px solid #d5d9d5; color: #fff; font: bold 11px "Liberation Sans", sans-serif; box-shadow: 0 6px 6px -3px rgba(0, 0, 0, .18); }

/* toolbar */
.toolbar { height: 45px; display: flex; align-items: center; padding-left: 76px; background: linear-gradient(#f1f0e8, #edeadb); font-size: 12px; }
.dim { color: #7d7d7d; }
.divider { width: 1px; height: 30px; background: #c6c4b6; }
.ad-mark { font: 8px "Liberation Sans", sans-serif; fill: #d05050; text-anchor: middle; }

/* address bar */
.addrbar { height: 32px; display: flex; align-items: center; padding-left: 7px; background: #ece9d8; border-top: 1px solid #dbd8c6; border-bottom: 1px solid #f6f5ee; }
.urlbox { width: 983px; height: 25px; display: flex; align-items: center; padding-left: 11px; background: #fff; border: 1px solid #c6d0de; border-radius: 3px; }
.url { margin-left: 3px; font: 16.850px "Liberation Sans", sans-serif; color: #a0a0a0; white-space: nowrap; flex: 1; }
.url b { font-weight: 400; color: #222; }
.bigpic { width: 79px; height: 20px; display: flex; align-items: center; gap: 7px; padding-left: 9px; background: #6ee192; color: #fff; font-size: 12px; }
.drop { margin-left: 9px; margin-right: 1px; width: 14px; height: 23px; display: flex; align-items: center; justify-content: center; background: linear-gradient(#c5d6f7, #b2c8f0); border-radius: 2px; }
.searchbox { margin-left: 11px; width: 240px; height: 25px; padding: 3px 7px; font-size: 14px; line-height: 18px; color: #9a9a9a; background: #fff; border: 1px solid #c6d0de; border-radius: 3px; }

/* favorites */
.favs { height: 31px; display: flex; align-items: center; padding-left: 19px; padding-bottom: 2px; white-space: nowrap; background: #f0efe6; border-bottom: 2px solid #aeaa98; font-size: 12px; }
.favtoggle { margin-right: 14px; }
.favsep { width: 1px; height: 14px; background: #c0bdae; }
.dot { width: 1px; height: 1px; margin-left: 10px; background: #888; }
.fav { display: flex; align-items: center; gap: 2px; margin-left: 7px; height: 21px; font-family: "DejaVu Sans", "Noto Sans CJK SC", sans-serif; color: #222; }
.favs .ml15 { margin-left: 15px; }
.favs .ml14 { margin-left: 14px; }
.fav .pg { margin: 0 1px; }
.fav.wx { margin-left: 6px; }
.fav.on { padding: 0 1px 0 1px; margin-left: 2px; background: #f3f2ea; border: 1px solid #7e8c9c; border-radius: 3px; }
.fav.on + .wx { margin-left: 5px; }
.more { margin-left: 5px; font: 16px "Liberation Sans", sans-serif; color: #888; }

/* page */
.page { position: relative; height: 555px; display: flex; background: #fff; }
.doc { width: 1349px; display: flex; }
.column { width: 1030px; height: 555px; padding-left: 65px; border-right: 1px solid #e5e5e5; }
.cad { font-family: "Liberation Sans", sans-serif; }
.side { padding: 34px 0 0 41px; }
.vscroll { width: 17px; height: 555px; padding: 192px 2px 0; background: #f0f0f0; }
.vthumb { height: 103px; background: #c1c1c1; }

/* CAD drawing */
.gl, .gy, .rd, .cy, .gtk, .cyb, .mgl, .wh, .rdd, .gld { fill: none; }
.gl { stroke: #00d000; shape-rendering: crispEdges; }
.gld { stroke: #00d000; stroke-width: 1.300; }
.gr .thin { fill: none; stroke: #00c000; stroke-width: 1.200; }
.gy { stroke: #7c7c7c; shape-rendering: crispEdges; }
.rd { stroke: #e00000; shape-rendering: crispEdges; }
.rdd { stroke: #e00000; stroke-dasharray: 4 1; }
.cy { stroke: #00e0f0; shape-rendering: crispEdges; }
.cyb { stroke: #12a8e0; shape-rendering: crispEdges; }
.cybox { fill: #000; stroke: #00d8e8; }
.sq { fill: #200; stroke: #9a9a9a; stroke-width: 1.500; }
.mg { fill: #000; stroke: #c000c0; stroke-width: 1.500; }
.mgl { stroke: #c000c0; stroke-width: 1.500; }
.slab { fill: url(#hatch); stroke: #bdbdbd; stroke-width: 3; }
.wall { fill: url(#hatch); stroke: #c2c2c2; stroke-width: 2.400; }
.gtk { stroke: #c2c2c2; stroke-width: 2; }
.band, .speck { fill: url(#speck); }
.wh { stroke: #eee; }
.n { font-size: 16px; fill: #dedede; }
.big { font-family: Roboto, sans-serif; font-weight: 100; font-size: 34px; fill: #ddd; }
.note { font-family: "Noto Sans CJK SC", sans-serif; font-weight: 300; font-size: 15px; fill: #e8e8e8; }
.cnt { font-family: "Noto Sans CJK SC", sans-serif; font-weight: 300; font-size: 11px; fill: #e0e0e0; }
.arrow { stroke: #f00; stroke-width: 3; marker-end: url(#ah); }
.ring { fill: none; stroke: #f00; stroke-width: 2.600; }
.callout { font-family: "Noto Sans CJK SC", sans-serif; font-weight: 500; font-size: 20px; letter-spacing: 3px; fill: #f00; }

/* advert */
.ad { width: 266px; height: 109px; display: flex; flex-direction: column; align-items: center; background: #fff; border: 1px solid #dcdcdc; }
.ad-brand { display: flex; align-items: flex-start; margin-top: 6px; margin-left: -1px; gap: 3px; }
.ad-name { display: flex; flex-direction: column; }
.ad-cn { font: 700 36px/38px "Noto Sans CJK SC", sans-serif; color: #17569f; white-space: nowrap; }
.ad-url { font: 700 13px/14px "Liberation Sans", sans-serif; color: #2a63a8; letter-spacing: .9px; white-space: nowrap; margin-top: 2px; }
.ad-vip { margin-top: 1px; font: 900 36px/38px "Noto Sans CJK SC", sans-serif; background: linear-gradient(#a83a04, #e8801c 55%, #f6c488); -webkit-background-clip: text; background-clip: text; color: transparent; white-space: nowrap; }

/* floating buttons */
.floats { position: absolute; left: 1283px; top: 290px; display: flex; flex-direction: column; gap: 11px; }
.float { width: 44px; height: 44px; color: #fff; font-size: 15px; line-height: 19px; text-align: center; }
.float.top { display: flex; align-items: center; justify-content: center; background: #c1c1c1; }
.float.orange { display: block; background: #ff6600; }

/* horizontal scrollbar */
.hscroll { height: 15px; display: flex; align-items: center; padding: 1px 0 1px 5px; background: #f0f0f0; border-bottom: 1px solid #e6e4d8; }
.harrow { margin-right: 6px; }
.hthumb { width: 1296px; height: 13px; background: #c1c1c1; }
.harrow.right { margin-left: 25px; }

/* status bar */
.status { height: 25px; display: flex; align-items: center; padding-left: 10px; background: #ece9d8; border-top: 1px solid #d9d6c5; color: #666; font-size: 12px; }
.st-left { color: #444; }
.st-right { margin-left: auto; display: flex; align-items: center; padding-right: 4px; }
.zoomval { font: 13px "Liberation Sans", sans-serif; color: #7a7a7a; }

/* taskbar */
.taskbar { height: 40px; display: flex; background: #03090d; color: #fff; }
.start { width: 48px; display: flex; align-items: center; justify-content: center; background: #000; }
.cortana { width: 344px; display: flex; align-items: center; padding-left: 9px; background: #3a3a3a; }
.ct-text { margin-left: 5px; font-size: 13px; color: #a2a2a2; }
.mic { margin-left: auto; margin-right: 15px; }
.tb { position: relative; width: 49px; display: flex; align-items: center; justify-content: center; }
.tb-a { width: 52px; }
.tb-b { width: 53px; }
.tb-swirl { margin-left: 3px; }
.tb.run::after, .tb.active::after { content: ""; position: absolute; left: 4px; right: 5px; bottom: 0; height: 2px; background: #76b9ed; }
.tb.active { background: #3a4246; }
.tb.active::after { left: 0; right: 0; }
.tray { margin-left: auto; display: flex; align-items: center; padding-right: 20px; }
.ime { width: 14px; font-size: 14px; }
.clock { width: 62px; display: flex; flex-direction: column; align-items: center; gap: 4px; font-size: 13px; line-height: 16px; font-family: "Liberation Sans", sans-serif; }
.notif { position: relative; width: 26px; height: 26px; }
.notif-n { position: absolute; left: 7px; top: 9px; width: 22px; height: 22px; border-radius: 50%; background: #3a3a3a; border: 1px solid #666; color: #fff; font: bold 12px/20px "Liberation Sans", sans-serif; text-align: center; }
```
